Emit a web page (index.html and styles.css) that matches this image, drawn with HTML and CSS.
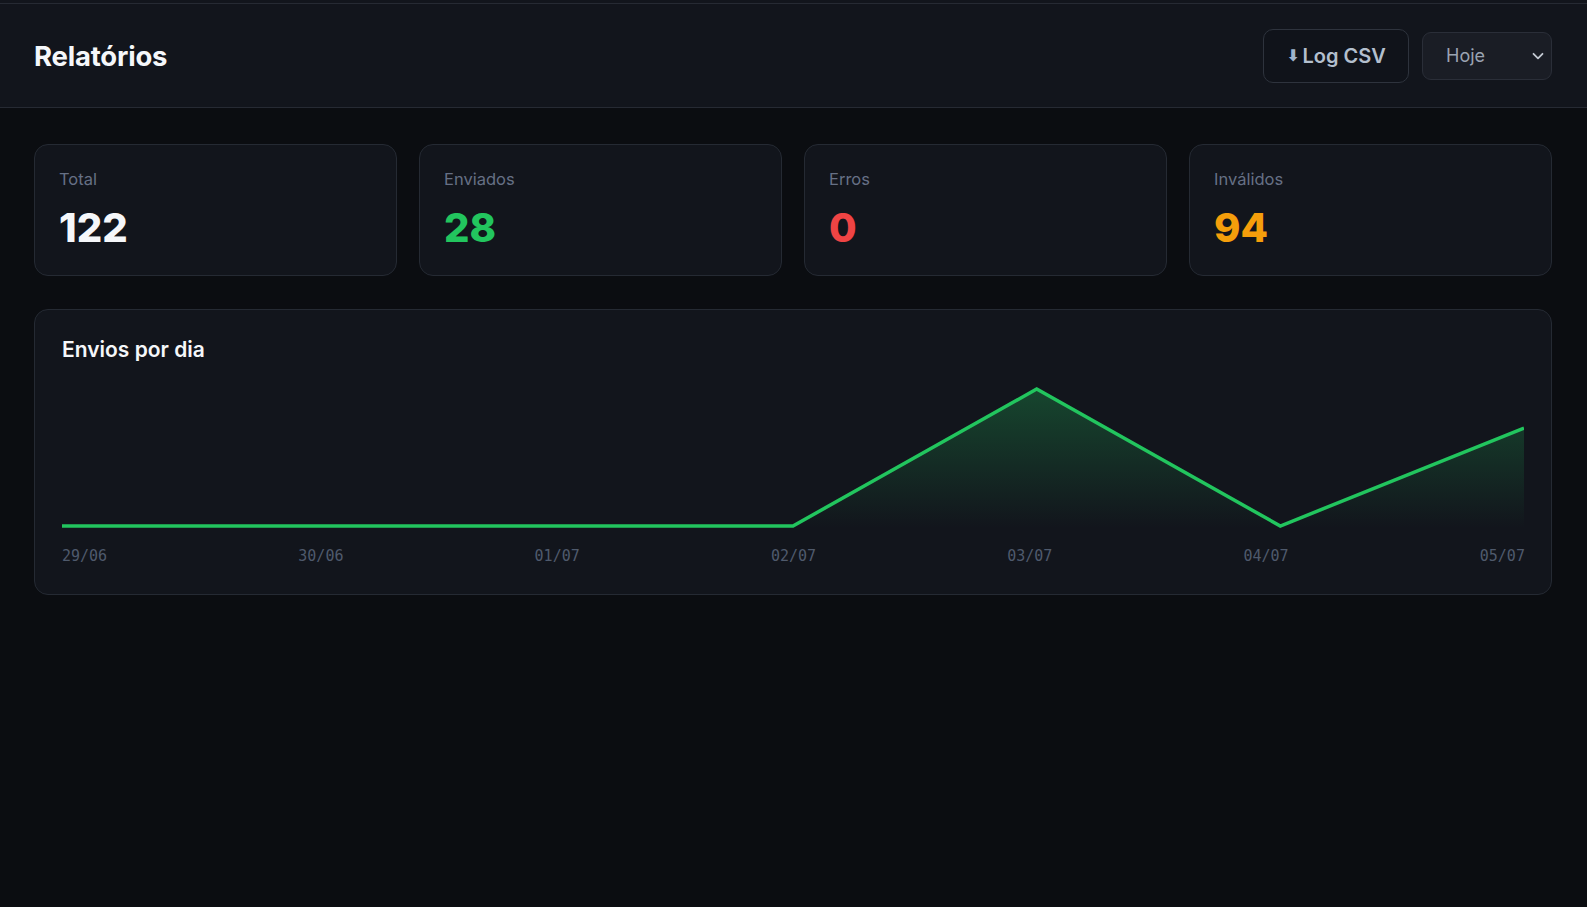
FILE: index.html
```html
<!DOCTYPE html>
<html lang="pt-BR">
<head>
<meta charset="UTF-8">
<title>Relatórios</title>
<link rel="stylesheet" href="styles.css">
</head>
<body>
	<div class="topbar">
		<div class="topbar-inner">
			<h1 class="page-title">Relatórios</h1>
			<div class="actions">
				<button class="btn-log" type="button"><span class="arrow">⬇</span>Log CSV</button>
				<div class="select">
					<span>Hoje</span>
					<svg class="chevron" width="14" height="14" viewBox="0 0 14 14"><path d="M2.5 4.8 L7 9.3 L11.5 4.8" fill="none" stroke="currentColor" stroke-width="1.8" stroke-linecap="round" stroke-linejoin="round"/></svg>
				</div>
			</div>
		</div>
	</div>

	<div class="content">
		<div class="stats">
			<div class="stat-card">
				<div class="stat-label">Total</div>
				<div class="stat-value">122</div>
			</div>
			<div class="stat-card">
				<div class="stat-label">Enviados</div>
				<div class="stat-value green">28</div>
			</div>
			<div class="stat-card">
				<div class="stat-label">Erros</div>
				<div class="stat-value red">0</div>
			</div>
			<div class="stat-card">
				<div class="stat-label">Inválidos</div>
				<div class="stat-value orange">94</div>
			</div>
		</div>

		<div class="chart-card">
			<h2 class="chart-title">Envios por dia</h2>
			<svg class="chart" width="1462" height="150" viewBox="0 0 1462 150">
				<defs>
					<linearGradient id="fillGrad" x1="0" y1="0" x2="0" y2="1">
						<stop offset="0" stop-color="#22c55e" stop-opacity="0.28"/>
						<stop offset="1" stop-color="#22c55e" stop-opacity="0"/>
					</linearGradient>
				</defs>
				<polygon points="0,148 243.7,148 487.3,148 731,148 974.7,11 1218.3,148 1462,50 1462,150 0,150" fill="url(#fillGrad)"/>
				<polyline points="0,148 243.7,148 487.3,148 731,148 974.7,11 1218.3,148 1462,50" fill="none" stroke="#22c55e" stroke-width="3.5" stroke-linejoin="miter"/>
			</svg>
			<div class="chart-labels">
				<span>29/06</span>
				<span>30/06</span>
				<span>01/07</span>
				<span>02/07</span>
				<span>03/07</span>
				<span>04/07</span>
				<span>05/07</span>
			</div>
		</div>
	</div>
</body>
</html>
```

FILE: styles.css
```css
html, body {
	margin: 0;
	padding: 0;
}

body {
	background-color: #0b0d11;
	color: #f3f4f6;
	font-family: Inter, "Noto Sans", sans-serif;
	min-height: 907px;
}

.topbar {
	background-color: #12151c;
	padding-top: 3px;
	border-bottom: 1px solid #262a33;
}

.topbar-inner {
	border-top: 1px solid #262a33;
	height: 103px;
	padding: 0 35px 0 34px;
	display: flex;
	align-items: center;
	justify-content: space-between;
}

.page-title {
	margin: 0;
	font-size: 27.5px;
	font-weight: 700;
	color: #f5f7fa;
	letter-spacing: -0.2px;
}

.actions {
	display: flex;
	align-items: center;
	gap: 13px;
}

.btn-log {
	width: 146px;
	height: 54px;
	background-color: #10131a;
	border: 1px solid #2e333d;
	border-radius: 10px;
	color: #b3bfcd;
	font-family: Inter, sans-serif;
	font-size: 20px;
	font-weight: 600;
	display: flex;
	align-items: center;
	justify-content: center;
	padding: 0;
}

.btn-log .arrow {
	font-family: "DejaVu Sans", sans-serif;
	font-size: 16px;
	margin-right: 3px;
	color: #9fb4cc;
}

.select {
	width: 130px;
	height: 48px;
	box-sizing: border-box;
	background-color: #1a1d25;
	border: 1px solid #2a2e38;
	border-radius: 9px;
	display: flex;
	align-items: center;
	justify-content: space-between;
	padding: 0 6px 0 23px;
	color: #9aa3b1;
	font-size: 18px;
}

.chevron {
	color: #c3c9d2;
}

.content {
	padding: 36px 35px 0 34px;
}

.stats {
	display: grid;
	grid-template-columns: repeat(4, 1fr);
	gap: 22px;
}

.stat-card {
	background-color: #12151c;
	border: 1px solid #252a33;
	border-radius: 14px;
	padding: 22px 24px 22px 24px;
	box-sizing: border-box;
	height: 132px;
}

.stat-label {
	font-size: 16.5px;
	line-height: 24px;
	color: #667085;
}

.stat-value {
	margin-top: 13px;
	font-size: 40px;
	line-height: 48px;
	font-weight: 800;
	color: #f5f7fa;
}

.stat-value.green {
	color: #22c55e;
}

.stat-value.red {
	color: #ef4444;
}

.stat-value.orange {
	color: #f59e0b;
}

.chart-card {
	margin-top: 33px;
	background-color: #12151c;
	border: 1px solid #252a33;
	border-radius: 14px;
	padding: 26px 26px 29px 27px;
}

.chart-title {
	margin: 0;
	font-size: 21px;
	line-height: 28px;
	font-weight: 600;
	color: #f5f7fa;
}

.chart {
	display: block;
	margin-top: 14px;
}

.chart-labels {
	margin-top: 20px;
	display: flex;
	justify-content: space-between;
	font-family: "DejaVu Sans Mono", monospace;
	font-size: 15px;
	line-height: 17px;
	color: #4f5a6c;
}
```
